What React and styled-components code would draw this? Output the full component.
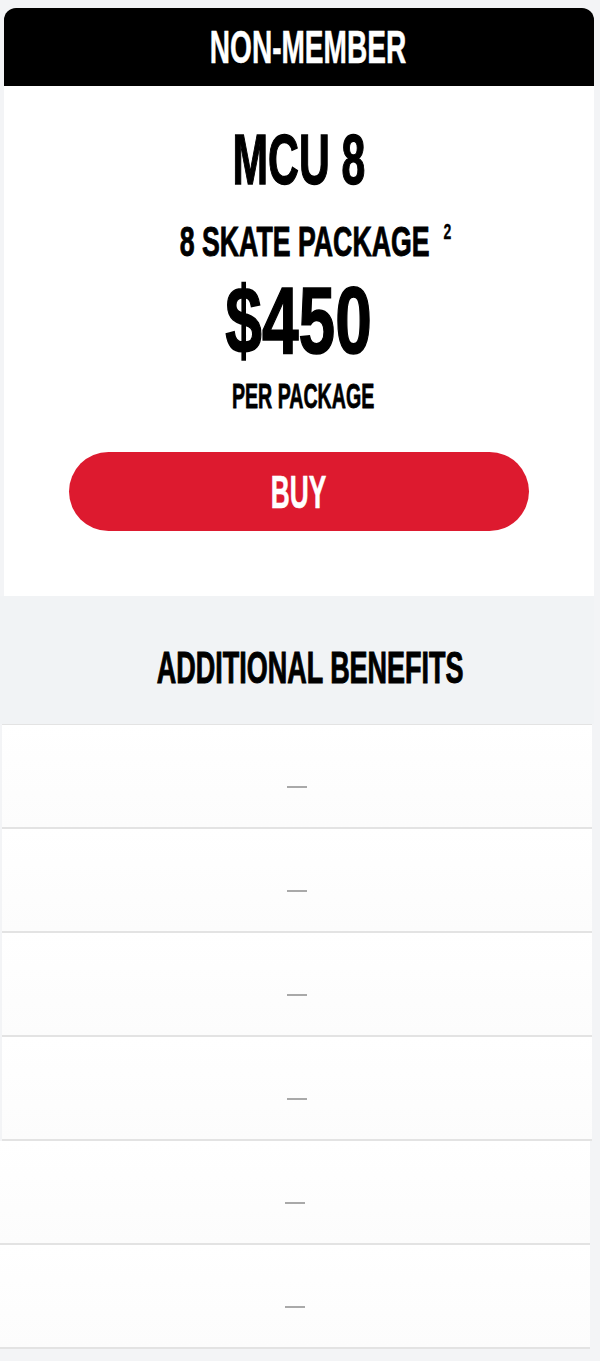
import React from "react";
import styled, { createGlobalStyle } from "styled-components";

const FONT = `"Liberation Sans", Arial, sans-serif`;

const GlobalStyle = createGlobalStyle`
  html, body {
    margin: 0;
    padding: 0;
    background: #f3f4f6;
  }
  body {
    font-family: ${FONT};
  }
`;

const Page = styled.div`
  width: 600px;
  min-height: 1361px;
  padding-top: 8px;
  box-sizing: border-box;
  background: #f3f4f6;
`;

const Card = styled.div`
  margin-left: 4px;
  width: 590px;
`;

const Header = styled.div`
  height: 78px;
  background: #000;
  border-radius: 12px 12px 0 0;
  display: flex;
  align-items: center;
  justify-content: center;
  padding-left: 17px;
  box-sizing: border-box;
  color: #fff;
  font-size: 46px;
  font-weight: 700;
  line-height: 1;
`;

const Panel = styled.div`
  background: #fff;
  display: flex;
  flex-direction: column;
  align-items: center;
  padding: 39px 0 65px;
`;

/* condensed look: the headline face is much narrower than Liberation Sans */
const Squeeze = styled.span`
  display: inline-block;
  transform: scaleX(${(p) => p.$x || 0.6});
  transform-origin: center;
  white-space: nowrap;
  -webkit-text-stroke: ${(p) => p.$bold || 0.8}px currentColor;
`;

const Line = styled.div`
  font-weight: 700;
  line-height: 1;
  color: #000;
  font-size: ${(p) => p.$size}px;
  margin-top: ${(p) => p.$gap || 0}px;
  padding-left: ${(p) => p.$shift || 0}px;
  text-align: center;
`;

const Sup = styled.span`
  font-size: 22px;
  vertical-align: top;
  margin-left: 22px;
  -webkit-text-stroke: 0.3px currentColor;
`;

const BuyButton = styled.button`
  margin-top: 39px;
  width: 460px;
  height: 79px;
  border: none;
  border-radius: 40px;
  background: #dd1a2f;
  color: #fff;
  font-family: ${FONT};
  font-size: 47px;
  font-weight: 700;
  line-height: 1;
  cursor: pointer;
  display: flex;
  align-items: center;
  justify-content: center;
  padding: 0;
`;

const Benefits = styled.div`
  width: 594px;
`;

const BenefitsTitle = styled.div`
  height: 128px;
  box-sizing: border-box;
  padding-top: 50px;
  padding-left: 27px;
  background: #f1f3f5;
  text-align: center;
  font-size: 44px;
  font-weight: 700;
  line-height: 1;
  color: #000;
`;

const Row = styled.div`
  width: 590px;
  height: ${(p) => (p.$first ? 105 : 104)}px;
  box-sizing: border-box;
  margin-left: ${(p) => (p.$flush ? 0 : 2)}px;
  background: linear-gradient(#fff, #fcfcfc);
  border-bottom: 2px solid #e3e3e3;
  border-top: ${(p) => (p.$first ? "1px solid #e3e3e3" : "none")};
  display: flex;
  justify-content: center;
  align-items: center;
  padding-top: 22px;
`;

const Dash = styled.span`
  display: block;
  width: 20px;
  height: 2px;
  background: #a9a9a9;
`;

const rows = [false, false, false, false, true, true];

export default function App() {
  return (
    <Page>
      <GlobalStyle />
      <Card>
        <Header>
          <Squeeze $x={0.61} $bold={0.5}>NON-MEMBER</Squeeze>
        </Header>
        <Panel>
          <Line $size={70}>
            <Squeeze $x={0.61} $bold={1.4}>MCU 8</Squeeze>
          </Line>
          <Line $size={42} $gap={26} $shift={33}>
            <Squeeze $x={0.636} $bold={0.9}>
              8 SKATE PACKAGE
              <Sup>2</Sup>
            </Squeeze>
          </Line>
          <Line $size={94} $gap={11}>
            <Squeeze $x={0.7} $bold={1.6}>$450</Squeeze>
          </Line>
          <Line $size={35} $gap={10} $shift={8}>
            <Squeeze $x={0.56} $bold={0.8}>PER PACKAGE</Squeeze>
          </Line>
          <BuyButton>
            <Squeeze $x={0.56} $bold={0.6}>BUY</Squeeze>
          </BuyButton>
        </Panel>
      </Card>
      <Benefits>
        <BenefitsTitle>
          <Squeeze $x={0.613} $bold={1}>ADDITIONAL BENEFITS</Squeeze>
        </BenefitsTitle>
        {rows.map((flush, i) => (
          <Row key={i} $first={i === 0} $flush={flush}>
            <Dash />
          </Row>
        ))}
      </Benefits>
    </Page>
  );
}
